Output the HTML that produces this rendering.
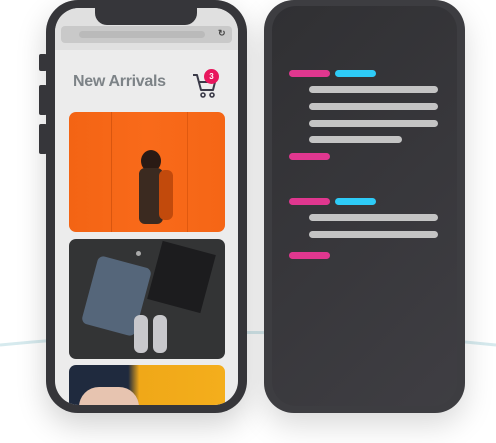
<!DOCTYPE html>
<html><head><meta charset="utf-8"><style>
*{margin:0;padding:0;box-sizing:border-box}
body{width:496px;height:443px;background:#fff;position:relative;overflow:hidden;font-family:"Liberation Sans",sans-serif}
.abs{position:absolute}
.bar{position:absolute;height:7px;border-radius:4px}
.p{background:#e0378f}.c{background:#2ecbf7}.g{background:#c4c4c4}
</style></head><body>
<svg class="abs" style="left:0;top:0" width="496" height="443"><path d="M0 345 Q250 320 496 345" stroke="#d6eaee" stroke-width="3" fill="none"/></svg>
<!-- left phone -->
<div class="abs" style="left:46px;top:0;width:201px;height:413px;background:#36363a;border-radius:32px;box-shadow:0 12px 30px rgba(0,0,0,.18)"></div>
<div class="abs" style="left:39px;top:54px;width:8px;height:17px;background:#36363a;border-radius:2px"></div>
<div class="abs" style="left:39px;top:85px;width:8px;height:30px;background:#36363a;border-radius:2px"></div>
<div class="abs" style="left:39px;top:124px;width:8px;height:30px;background:#36363a;border-radius:2px"></div>
<div class="abs" style="left:55px;top:8px;width:183px;height:397px;background:#ececec;border-radius:24px;overflow:hidden">
 <div class="abs" style="left:0;top:0;width:183px;height:42px;background:#e0e0e0"></div>
 <div class="abs" style="left:6px;top:18px;width:171px;height:17px;background:#c9c9c9;border-radius:4px"></div>
 <div class="abs" style="left:24px;top:23px;width:126px;height:7px;background:#bababa;border-radius:4px"></div>
 <div class="abs" style="left:163px;top:20px;font-size:9px;color:#444;font-weight:bold">&#8635;</div>
 <div class="abs" style="left:18px;top:65px;font-size:16px;font-weight:bold;color:#7d8387;letter-spacing:-0.3px">New Arrivals</div>
 <svg class="abs" style="left:137px;top:63px" width="28" height="28" viewBox="0 0 28 28"><path d="M1 4h4l4 15h12l2-8H7" stroke="#3a3a48" stroke-width="2" fill="none" stroke-linejoin="round"/><circle cx="11" cy="24" r="2" stroke="#3a3a48" stroke-width="1.6" fill="none"/><circle cx="20" cy="24" r="2" stroke="#3a3a48" stroke-width="1.6" fill="none"/></svg>
 <div class="abs" style="left:149px;top:61px;width:15px;height:15px;border-radius:50%;background:#e8175d;color:#fff;font-size:8px;font-weight:bold;text-align:center;line-height:15px">3</div>
 <div class="abs" style="left:14px;top:104px;width:156px;height:120px;border-radius:7px;overflow:hidden;background:linear-gradient(90deg,#f36414,#f96a1a 50%,#f56616)">
  <div class="abs" style="left:42px;top:0;width:1px;height:120px;background:#d9560f"></div>
  <div class="abs" style="left:118px;top:0;width:1px;height:120px;background:#e0590f"></div>
  <div class="abs" style="left:72px;top:38px;width:20px;height:22px;border-radius:50%;background:#2a1a14"></div>
  <div class="abs" style="left:70px;top:56px;width:24px;height:56px;background:#3b2a20;border-radius:6px"></div>
  <div class="abs" style="left:90px;top:58px;width:14px;height:50px;background:#c24a0c;border-radius:6px"></div>
 </div>
 <div class="abs" style="left:14px;top:231px;width:156px;height:120px;border-radius:7px;overflow:hidden;background:#333435">
  <div class="abs" style="left:20px;top:22px;width:55px;height:70px;background:#55667a;border-radius:6px;transform:rotate(15deg)"></div>
  <div class="abs" style="left:85px;top:8px;width:55px;height:60px;background:#1c1c1e;transform:rotate(15deg)"></div>
  <div class="abs" style="left:65px;top:76px;width:14px;height:38px;background:#c8c8cc;border-radius:6px"></div>
  <div class="abs" style="left:84px;top:76px;width:14px;height:38px;background:#c8c8cc;border-radius:6px"></div>
  <div class="abs" style="left:67px;top:12px;width:5px;height:5px;border-radius:50%;background:#aaa"></div>
 </div>
 <div class="abs" style="left:14px;top:357px;width:156px;height:60px;border-radius:7px;overflow:hidden;background:linear-gradient(90deg,#1f2a3e 0 38%,#f0a818 45%,#f4ae1c)">
  <div class="abs" style="left:10px;top:22px;width:60px;height:40px;background:#e7c4b0;border-radius:20px"></div>
 </div>
</div>
<div class="abs" style="left:95px;top:0;width:102px;height:25px;background:#36363a;border-radius:0 0 12px 12px"></div>
<!-- right phone -->
<div class="abs" style="left:264px;top:0;width:201px;height:413px;background:#3d3d41;border-radius:30px;box-shadow:0 12px 30px rgba(0,0,0,.15)"></div>
<div class="abs" style="left:272px;top:6px;width:185px;height:400px;background:linear-gradient(135deg,#303033,#3f3e43);border-radius:24px"></div>
<div class="bar p" style="left:289px;top:70px;width:41px"></div>
<div class="bar c" style="left:335px;top:70px;width:41px"></div>
<div class="bar g" style="left:309px;top:86px;width:129px"></div>
<div class="bar g" style="left:309px;top:103px;width:129px"></div>
<div class="bar g" style="left:309px;top:120px;width:129px"></div>
<div class="bar g" style="left:309px;top:136px;width:93px"></div>
<div class="bar p" style="left:289px;top:153px;width:41px"></div>
<div class="bar p" style="left:289px;top:198px;width:41px"></div>
<div class="bar c" style="left:335px;top:198px;width:41px"></div>
<div class="bar g" style="left:309px;top:214px;width:129px"></div>
<div class="bar g" style="left:309px;top:231px;width:129px"></div>
<div class="bar p" style="left:289px;top:252px;width:41px"></div>
</body></html>
